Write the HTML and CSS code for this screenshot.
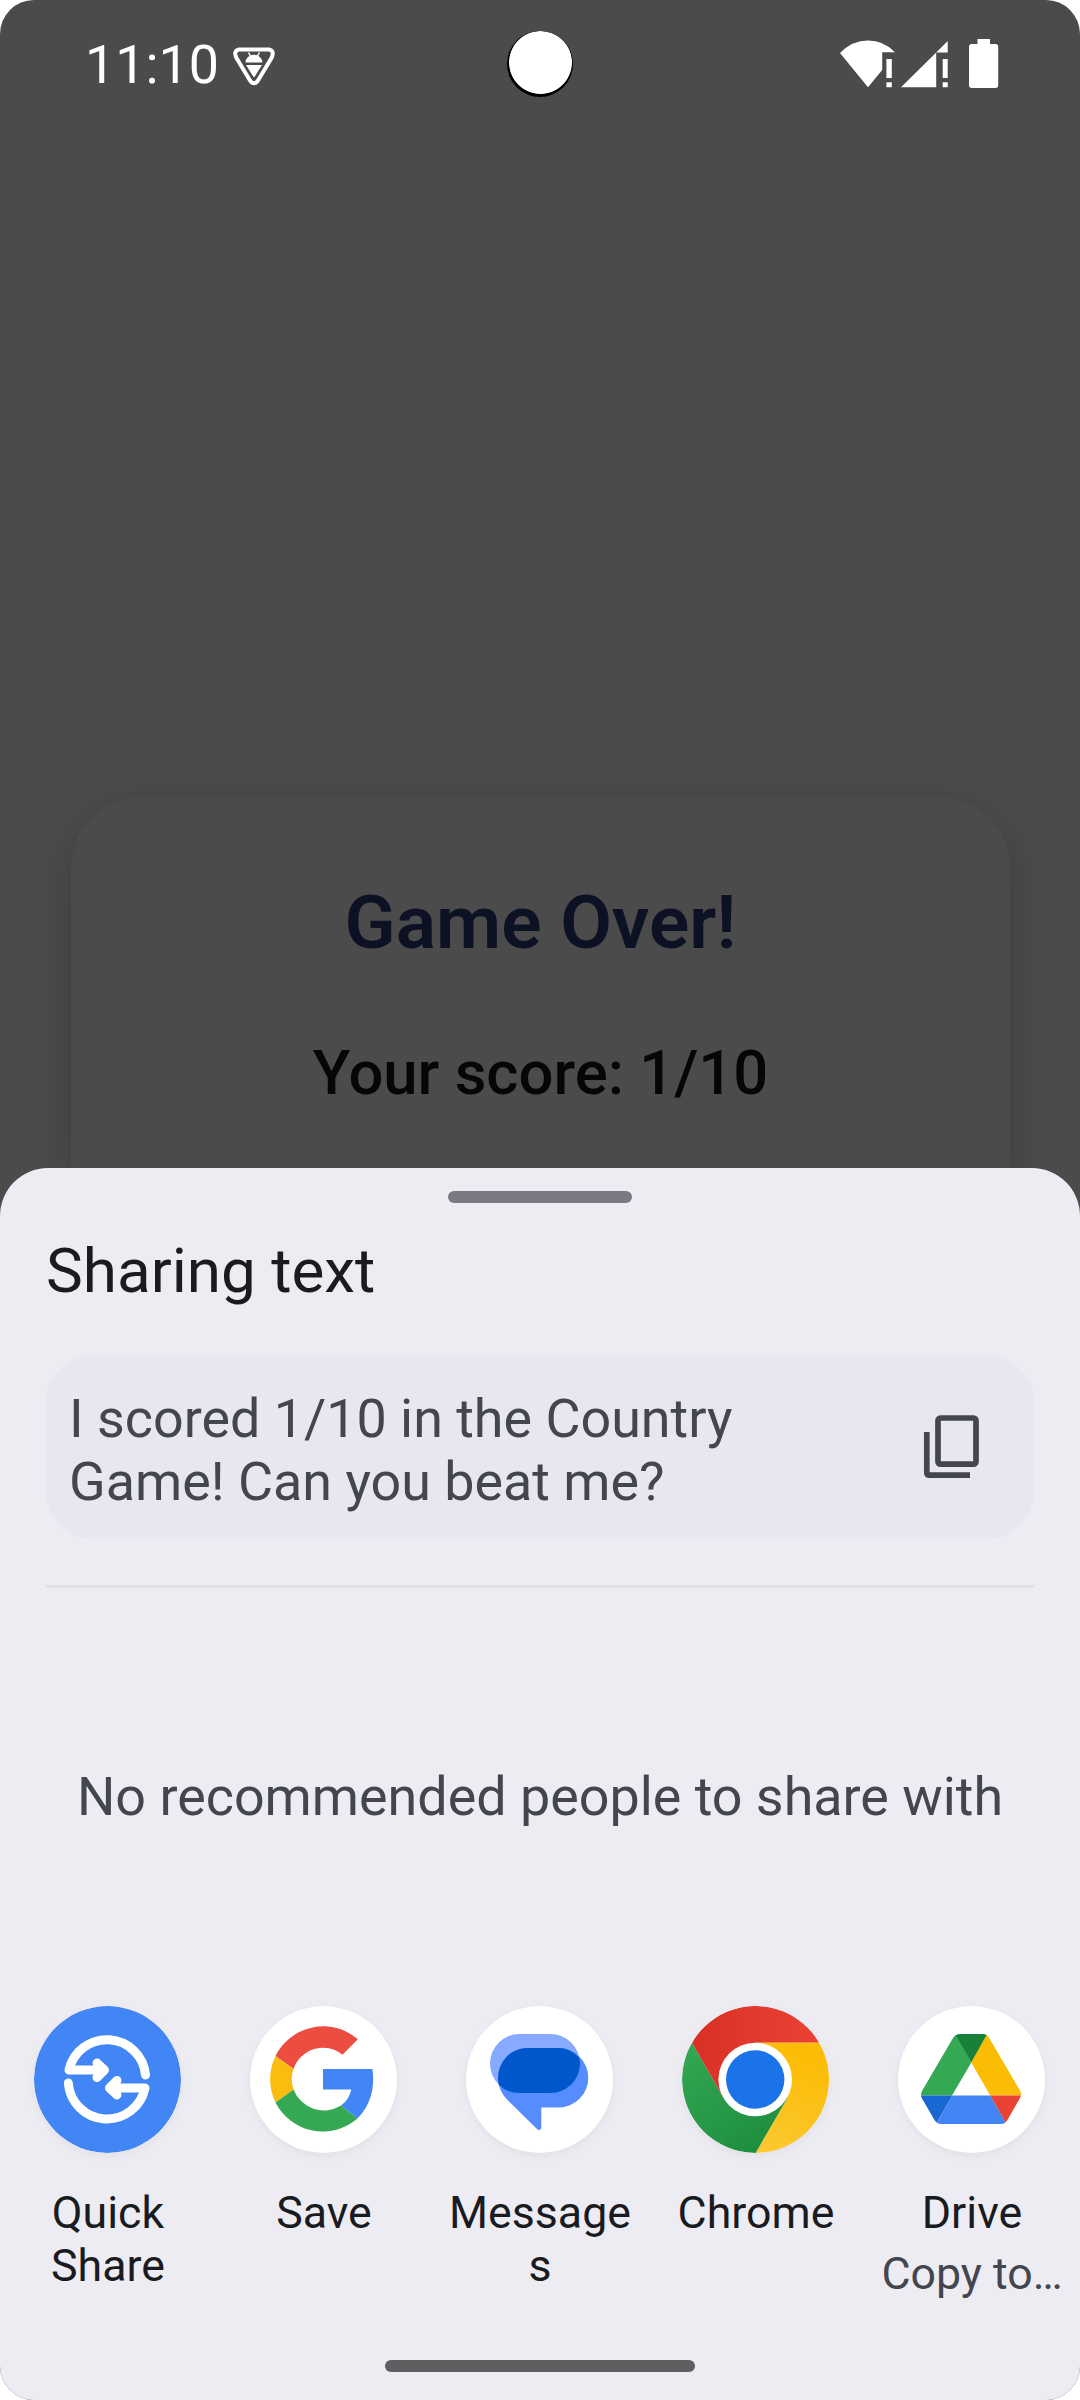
FILE: index.html
```html
<!DOCTYPE html>
<html lang="en">
<head>
<meta charset="utf-8">
<title>Sharing text</title>
<link rel="stylesheet" href="styles.css">
</head>
<body>
<div class="screen">
  <header class="status-bar">
    <span class="clock">11:10</span>
    <svg class="shield" width="44" height="42" viewBox="0 0 44 42">
      <path d="M7 3.500H37Q43 5 39.500 12L26 34.500Q22 40 18 34.500L4.500 12Q1 5 7 3.500Z" fill="none" stroke="#fff" stroke-width="4"/>
      <path d="M13.500 16.500a8.400 7.800 0 0 1 16.800 0ZM14 19H30L22.800 30.500Q22 31.500 21.200 30.500Z" fill="#fff"/>
      <path d="M18.500 10 16.500 6.500M25.500 10 27.500 6.500" stroke="#fff" stroke-width="1.500"/>
    </svg>
    <span class="camera"></span>
    <svg class="signals" width="160" height="50" viewBox="840 39 160 50" fill="#fff">
      <path d="M840 53Q852 40.500 868 40.500T895 52.300H882.200V70L868 87.300Z"/>
      <path d="M886.400 59h5.400v19h-5.400zM886.400 82.300h5.400v5h-5.400z"/>
      <path d="M901 87.300 936.200 52.500V87.300ZM936.200 52.500 947.700 41V52.500Z"/>
      <path d="M942.700 59h5v19h-5zM942.700 82.300h5v5h-5z"/>
      <path d="M977.500 39H990v5h5.500q2.700 0 2.700 2.700V85.300q0 2.700-2.700 2.700H971.700q-2.700 0-2.700-2.700V46.700q0-2.700 2.700-2.700h5.800z"/>
    </svg>
  </header>

  <section class="result-card">
    <h1 class="result-title">Game Over!</h1>
    <p class="result-score">Your score: 1/10</p>
  </section>

  <section class="sheet">
    <div class="drag-handle"></div>
    <h2 class="sheet-title">Sharing text</h2>
    <div class="preview">
      <p class="preview-text">I scored 1/10 in the Country Game! Can you beat me?</p>
      <svg class="copy" width="56" height="66" viewBox="923 1414 56 66" fill="none" stroke="#43464e" stroke-width="5.700">
        <rect x="938" y="1418" width="38" height="46.200" rx="2.500"/>
        <path d="M926.800 1432V1472.500Q926.800 1475.200 929.500 1475.200H970"/>
      </svg>
    </div>
    <hr class="divider">
    <p class="empty">No recommended people to share with</p>
    <ul class="apps">
      <li class="app">
        <svg class="app-icon" width="147" height="147" viewBox="0 0 147 147">
          <circle cx="73.500" cy="73.500" r="73.500" fill="#4285f4"/>
          <g fill="none" stroke="#fff" stroke-width="9" stroke-linecap="round" stroke-linejoin="round">
            <path d="M111.500 69A38.800 38.800 0 0 0 35 64H69M63 57 70.500 64 63 71.500"/>
            <path d="M34.300 77A38.800 38.800 0 0 0 111 82H77M83 74.500 75.500 82 83 89"/>
          </g>
        </svg>
        <span class="app-name">Quick Share</span>
      </li>
      <li class="app">
        <svg class="app-icon" width="147" height="147" viewBox="0 0 147 147">
          <circle cx="73.500" cy="73.500" r="73.500" fill="#fff"/>
          <path d="M25.500 50A53 53 0 0 1 107.800 33.300L92.500 48.700A31 31 0 0 0 43.500 63Z" fill="#ec4d40"/>
          <path d="M25.500 50A53 53 0 0 0 25.500 96.500L43.500 83.500A31 31 0 0 1 43.500 63Z" fill="#fbbc10"/>
          <path d="M25.500 96.500A53 53 0 0 0 107.500 112.500L91 99.500A32.500 32.500 0 0 1 43.500 83.500Z" fill="#34a853"/>
          <path d="M73 63H122.500Q126.500 93 107.500 112.500L91 99.500Q99 94 101.300 83.500H73Z" fill="#4285f4"/>
        </svg>
        <span class="app-name">Save</span>
      </li>
      <li class="app">
        <svg class="app-icon" width="147" height="147" viewBox="0 0 147 147">
          <circle cx="73.500" cy="73.500" r="73.500" fill="#fff"/>
          <rect x="24" y="28" width="90" height="59" rx="29.500" fill="#87a9ff"/>
          <path d="M61.500 42H92.500A29.700 29.700 0 0 1 92.500 101.500H75.300V121Q75.300 124 73 124 72 124 70.500 122.500L41 93.500Q32 84 32 72A29.500 30 0 0 1 61.500 42Z" fill="#578cff"/>
          <path d="M61.500 42H92.500Q104 42 112.600 51 114 54 114 57.500A29.500 29.500 0 0 1 84.500 87H53.500Q41 87 33 79 32 76 32 72A29.500 30 0 0 1 61.500 42Z" fill="#0057cc"/>
        </svg>
        <span class="app-name">Messages</span>
      </li>
      <li class="app">
        <svg class="app-icon" width="147" height="147" viewBox="0 0 147 147">
          <defs>
            <linearGradient id="red"><stop offset="0" stop-color="#d93025"/><stop offset="1" stop-color="#ea4335"/></linearGradient>
            <linearGradient id="yellow" x1="0" y1="1" x2=".3" y2="0"><stop offset="0" stop-color="#fcc934"/><stop offset="1" stop-color="#fbbc04"/></linearGradient>
            <linearGradient id="green" x1="0" y1="0" x2=".7" y2="1"><stop offset="0" stop-color="#34a853"/><stop offset="1" stop-color="#1e8e3e"/></linearGradient>
          </defs>
          <path d="M73.500 36.500H137.200A73.500 73.500 0 0 1 73.500 147L105.500 92Z" fill="url(#yellow)"/>
          <path d="M10 36.700A73.500 73.500 0 0 0 73.500 147L105.500 92 41.500 92Z" fill="url(#green)"/>
          <path d="M10 36.700A73.500 73.500 0 0 1 137.200 36.500H73.500L41.500 92Z" fill="url(#red)"/>
          <circle cx="73.200" cy="73.500" r="36.800" fill="#fff"/>
          <circle cx="73.200" cy="73.500" r="29.200" fill="#1a73e8"/>
        </svg>
        <span class="app-name">Chrome</span>
      </li>
      <li class="app">
        <svg class="app-icon" width="147" height="147" viewBox="0 0 147 147">
          <defs><clipPath id="tri"><path d="M62 28H85Q89 28 91 31.500L122 84Q124 88 122 92L110 113Q107.500 118 103 118H43Q39 118 36.500 114L24 92.500Q22 89 24 85L55 32Q57.500 28 62 28Z"/></clipPath></defs>
          <circle cx="73.500" cy="73.500" r="73.500" fill="#fff"/>
          <g clip-path="url(#tri)">
            <path d="M57.500 28 73.300 56.500 54 89.500H20V80Z" fill="#34a853"/>
            <path d="M57 28H90L73.300 56.500Z" fill="#188038"/>
            <path d="M89 28 125 89.500H92.200L73.300 56.500Z" fill="#fbbc04"/>
            <path d="M20 89.500H54.400L38 118H20Z" fill="#1967d2"/>
            <path d="M54.400 89.500H92.200L108 117V119H37.500Z" fill="#4285f4"/>
            <path d="M92.200 89.500H125V119H109Z" fill="#ea4335"/>
          </g>
        </svg>
        <span class="app-name">Drive</span>
        <span class="app-detail">Copy to…</span>
      </li>
    </ul>
    <div class="nav-handle"></div>
  </section>
</div>
</body>
</html>
```
FILE: styles.css
```css
* { box-sizing: border-box; }

body {
  margin: 0;
  background: #fff;
  font-family: Roboto, "Liberation Sans", sans-serif;
}

h1, h2, p, ul { margin: 0; padding: 0; }

.screen {
  display: flex;
  flex-direction: column;
  width: 1080px;
  height: 2400px;
  overflow: hidden;
  border-radius: 34px;
  background: #4b4b4c;
}

.status-bar {
  position: relative;
  flex: none;
  display: flex;
  align-items: flex-start;
  height: 797px;
  padding: 0 80px 0 85px;
}

.clock {
  width: 147px;
  margin-top: 33px;
  color: #fff;
  font-size: 53.800px;
  line-height: 64px;
}

.shield { margin-top: 46px; }

.signals { margin: 39px 0 0 auto; }

/* Front camera cutout, laid over the bar */
.camera {
  position: absolute;
  left: 507px;
  top: 31px;
  width: 66px;
  height: 66px;
  border-radius: 50%;
  background: radial-gradient(circle at 33.500px 31.500px, #fff 31px, #000 31.800px);
}

.result-card {
  flex: none;
  height: 371px;
  margin: 0 70px 0 71px;
  padding-top: 80px;
  border-radius: 70px 70px 0 0;
  background: #4b4b4c;
  box-shadow: 0 14px 40px rgba(0, 0, 0, .2);
  text-align: center;
}

.result-title {
  color: #0c1124;
  font-size: 75px;
  font-weight: 600;
  line-height: 90px;
}

.result-score {
  margin-top: 69px;
  color: #060608;
  font-size: 61.600px;
  font-weight: 500;
  line-height: 74px;
}

.sheet {
  position: relative;
  display: flex;
  flex: 1;
  flex-direction: column;
  align-items: center;
  border-radius: 48px 48px 0 0;
  background: #eeecf3;
}

.drag-handle {
  width: 184px;
  height: 12px;
  margin-top: 23px;
  border-radius: 6px;
  background: #7b7a84;
}

.sheet-title {
  width: 988px;
  margin-top: 31px;
  color: #1a1b20;
  font-size: 62px;
  font-weight: 400;
  line-height: 74px;
}

.preview {
  display: flex;
  align-items: center;
  justify-content: space-between;
  width: 988px;
  height: 184px;
  margin-top: 47px;
  padding: 6px 55px 0 23px;
  border-radius: 48px;
  background: #e8e6f0;
}

.preview-text {
  width: 720px;
  color: #43464e;
  font-size: 53.850px;
  line-height: 63px;
}

.copy { margin-top: -6px; }

.divider {
  width: 988px;
  height: 3px;
  margin: 46px 0 0;
  border: 0;
  background: #e2e1e8;
}

.empty {
  margin-top: 177px;
  color: #43464e;
  font-size: 53.850px;
  line-height: 64px;
  white-space: nowrap;
}

.apps {
  display: grid;
  grid-template-columns: repeat(5, 216px);
  width: 1080px;
  height: 354px;
  margin-top: 177px;
  list-style: none;
}

.app {
  display: flex;
  flex-direction: column;
  align-items: center;
}

.app-icon {
  margin-right: 1px;
  border-radius: 50%;
  box-shadow: 0 3px 8px rgba(0, 0, 0, .05);
}

.app-name {
  width: 184px;
  margin-top: 34px;
  color: #1a1b20;
  font-size: 44.700px;
  line-height: 53px;
  text-align: center;
  overflow-wrap: break-word;
}

.app-detail {
  margin-top: 8px;
  color: #43464e;
  font-size: 44.700px;
  line-height: 53px;
  white-space: nowrap;
}

.nav-handle {
  width: 310px;
  height: 12px;
  border-radius: 6px;
  background: #5f5f61;
}
```
